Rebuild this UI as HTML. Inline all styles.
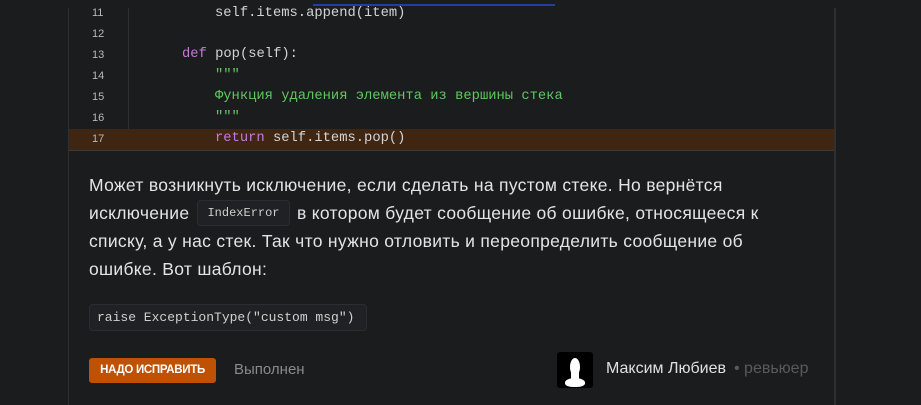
<!DOCTYPE html>
<html><head><meta charset="utf-8"><style>
*{margin:0;padding:0;box-sizing:border-box}
body{width:921px;height:405px;background:#1b1c1e;position:relative;overflow:hidden;font-family:"Liberation Sans","Noto Sans CJK SC",sans-serif}
.a{position:absolute;white-space:pre}
.mono{font-family:"Liberation Mono","DejaVu Sans Mono",monospace}
.ln{position:absolute;left:69px;width:59px;font-size:11px;color:#b8b8b8;padding-left:23px;font-family:"Liberation Sans",sans-serif}
.code{position:absolute;font-size:13.8px;color:#d4d4d4;font-family:"Liberation Mono",monospace;white-space:pre}
.p{position:absolute;left:89px;font-size:17.5px;color:#e4e4e4;white-space:pre;letter-spacing:0.3px}
</style></head><body>
<div class="a" style="left:313px;top:4px;width:242px;height:2px;background:#1e3fa8"></div>
<div class="a" style="left:68px;top:8px;width:1px;height:397px;background:#2e2f31"></div>
<div class="a" style="left:834px;top:8px;width:2px;height:397px;background:#2e2f31"></div>
<div class="a" style="left:128px;top:8px;width:1px;height:142px;background:#2e2f31"></div>
<div class="a" style="left:69px;top:129px;width:765px;height:21px;background:#3f2613"></div>
<div class="a" style="left:69px;top:150px;width:765px;height:1px;background:#3a3b3d"></div>

<div class="ln" style="top:7px">11</div>
<div class="ln" style="top:28px">12</div>
<div class="ln" style="top:49px">13</div>
<div class="ln" style="top:70px">14</div>
<div class="ln" style="top:91px">15</div>
<div class="ln" style="top:112px">16</div>
<div class="ln" style="top:133px">17</div>

<div class="code" style="left:215px;top:6px">self.items.append(item)</div>
<div class="code" style="left:182px;top:47px"><span style="color:#c678dd">def</span> pop(self):</div>
<div class="code" style="left:215px;top:68px;color:#5ec95e">"""</div>
<div class="code" style="left:215px;top:89px;color:#5ec95e">Функция удаления элемента из вершины стека</div>
<div class="code" style="left:215px;top:110px;color:#5ec95e">"""</div>
<div class="code" style="left:215px;top:131px"><span style="color:#c678dd">return</span> self.items.pop()</div>

<div class="p" style="top:175px">Может возникнуть исключение, если сделать на пустом стеке. Но вернётся</div>
<div class="p" style="top:203px">исключение</div>
<div class="a mono" style="left:197px;top:200px;width:93px;height:26px;border:1px solid #2c2d30;border-radius:4px;background:#202124;color:#cfcfcf;font-size:12px;line-height:24px;text-align:center">IndexError</div>
<div class="p" style="left:297px;top:203px">в котором будет сообщение об ошибке, относящееся к</div>
<div class="p" style="top:231px">списку, а у нас стек. Так что нужно отловить и переопределить сообщение об</div>
<div class="p" style="top:259px">ошибке. Вот шаблон:</div>

<div class="a mono" style="left:89px;top:304px;width:278px;height:27px;border:1px solid #2c2d30;border-radius:4px;background:#202124;color:#d0d0d0;font-size:13px;line-height:25px;padding-left:7px">raise ExceptionType("custom msg")</div>

<div class="a" style="left:89px;top:358px;width:127px;height:25px;background:#bf5104;border-radius:3px;color:#fff;font-size:11.5px;font-weight:bold;line-height:25px;text-align:center;letter-spacing:-0.3px">НАДО ИСПРАВИТЬ</div>
<div class="a" style="left:234px;top:361px;font-size:15px;color:#8a8a8a">Выполнен</div>

<div class="a" style="left:557px;top:352px;width:36px;height:36px;background:#000;border-radius:3px;overflow:hidden">
<div style="position:absolute;left:13px;top:6px;width:10px;height:18px;background:#fff;border-radius:50%"></div>
<div style="position:absolute;left:14px;top:18px;width:8px;height:10px;background:#fff"></div>
<div style="position:absolute;left:8px;top:26px;width:20px;height:9px;background:#fff;border-radius:50% 50% 40% 40%"></div>
</div>
<div class="a" style="left:606px;top:360px;font-size:16px;color:#e0e0e0">Максим Любиев</div>
<div class="a" style="left:734px;top:360px;font-size:16px;color:#5a5a5a">• ревьюер</div>
</body></html>
